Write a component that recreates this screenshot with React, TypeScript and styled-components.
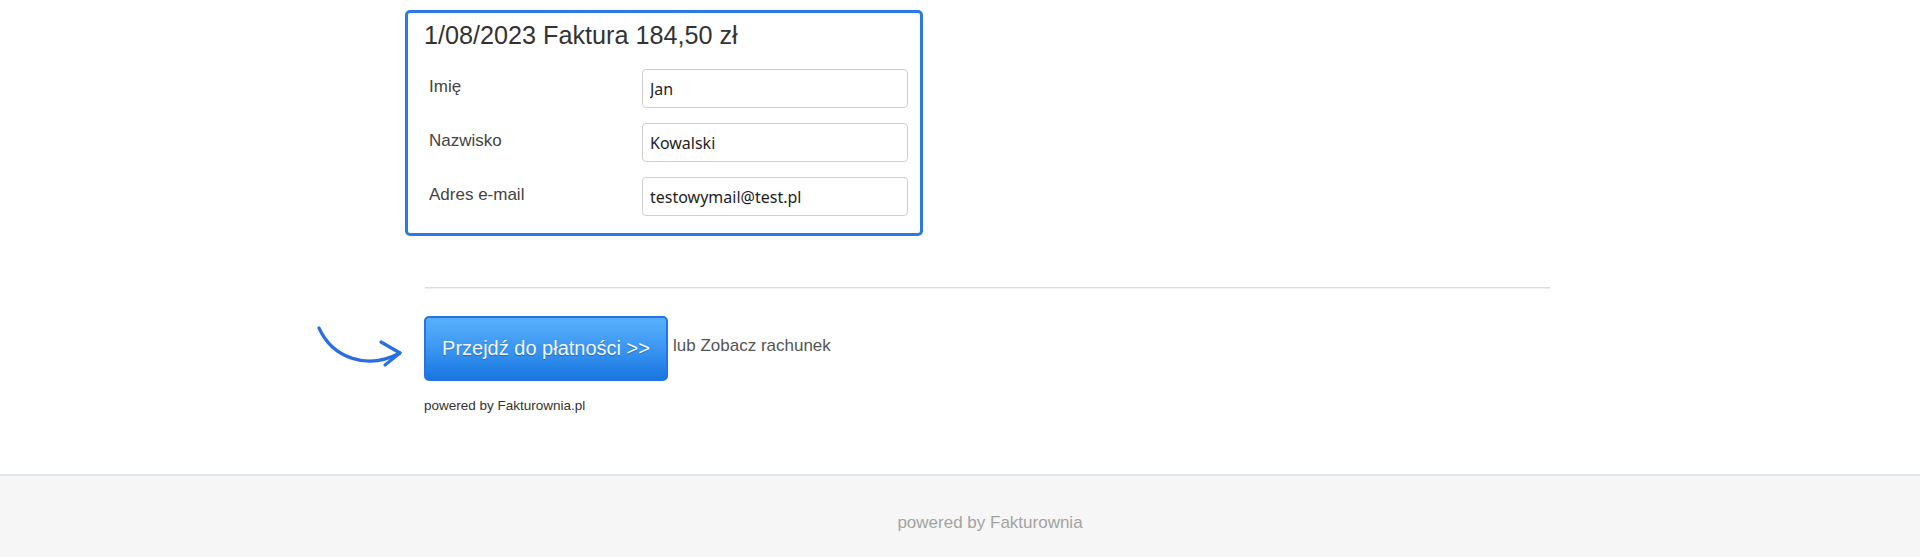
import React from "react";
import styled, { createGlobalStyle } from "styled-components";

const GlobalStyle = createGlobalStyle`
  html, body { margin: 0; padding: 0; background: #ffffff; }
  body { font-family: "Liberation Sans", Arial, sans-serif; color: #333; }
`;

const Page = styled.div`
  width: 1920px;
  height: 557px;
  display: flex;
  flex-direction: column;
  overflow: hidden;
`;

const Main = styled.main`
  flex: 1;
  padding-left: 54px;
`;

const Container = styled.div`
  width: 1126px;
  margin: 0 auto;
  display: flex;
  flex-direction: column;
`;

const FormBox = styled.section`
  box-sizing: border-box;
  width: 518px;
  height: 226px;
  margin: 10px 0 0 -19px;
  border: 3px solid #2b79e6;
  border-radius: 5px;
  padding: 8px 12px 0 16px;
  display: flex;
  flex-direction: column;
`;

const Title = styled.h2`
  margin: 0;
  font-family: "Liberation Sans", Arial, sans-serif;
  font-weight: 400;
  font-size: 25.2px;
  line-height: 28px;
  color: #333;
`;

const Fields = styled.div`
  margin-top: 20px;
  display: grid;
  grid-template-columns: 218px 266px;
  row-gap: 15px;
  align-items: center;
`;

const Label = styled.label`
  padding-left: 5px;
  font-size: 17px;
  color: #444;
  margin-top: -3px;
`;

const Input = styled.input`
  box-sizing: border-box;
  width: 266px;
  height: 39px;
  margin: 0;
  padding: 0 7px;
  border: 1px solid #cfcfcf;
  border-radius: 4px;
  background: #fff;
  font-family: "Noto Sans", "Open Sans", sans-serif;
  font-size: 16px;
  color: #1e1e1e;
  outline: none;
`;

const Divider = styled.hr`
  margin: 51px 0 0 1px;
  height: 0;
  border: 0;
  border-top: 1px solid #dcdcdc;
  border-bottom: 1px solid #efefef;
`;

const ActionRow = styled.div`
  position: relative;
  margin-top: 27px;
  display: flex;
  align-items: center;
`;

const ArrowMark = styled.svg`
  position: absolute;
  left: -110px;
  top: 9px;
  width: 92px;
  height: 48px;
  overflow: visible;
`;

const PayButton = styled.button`
  box-sizing: border-box;
  width: 244px;
  height: 65px;
  margin: 0;
  border: 2px solid #2573e4;
  border-radius: 5px;
  background: linear-gradient(to bottom, #58b0fb 0%, #3b96f1 50%, #1877e0 100%);
  color: #f4f8ff;
  font-family: "Liberation Sans", Arial, sans-serif;
  font-size: 20px;
  text-shadow: 0 1px 1px rgba(0, 40, 110, 0.35);
  cursor: pointer;
  padding: 0;
`;

const OrText = styled.span`
  margin-left: 5px;
  margin-top: -6px;
  font-size: 17px;
  color: #555;
`;

const Powered = styled.div`
  margin-top: 17px;
  font-size: 13.5px;
  line-height: 16px;
  color: #333;
`;

const Footer = styled.footer`
  box-sizing: border-box;
  height: 83px;
  border-top: 2px solid #dfe5ec;
  background: #f6f6f6;
  padding: 37px 0 0 60px;
  text-align: center;
  font-size: 17px;
  line-height: 20px;
  color: #a3a3a3;
`;

export default function App() {
  return (
    <>
      <GlobalStyle />
      <Page>
        <Main>
          <Container>
            <FormBox>
              <Title>1/08/2023 Faktura 184,50 zł</Title>
              <Fields>
                <Label>Imię</Label>
                <Input defaultValue="Jan" />
                <Label>Nazwisko</Label>
                <Input defaultValue="Kowalski" />
                <Label>Adres e-mail</Label>
                <Input defaultValue="testowymail@test.pl" />
              </Fields>
            </FormBox>
            <Divider />
            <ActionRow>
              <ArrowMark viewBox="0 0 92 48" aria-hidden="true">
                <path
                  d="M5 3 C 18 32, 52 46, 86 28"
                  fill="none"
                  stroke="#2a6fe0"
                  strokeWidth="3.2"
                  strokeLinecap="round"
                />
                <path
                  d="M67 17 L86 28 L71 40"
                  fill="none"
                  stroke="#2a6fe0"
                  strokeWidth="3.2"
                  strokeLinecap="round"
                  strokeLinejoin="round"
                />
              </ArrowMark>
              <PayButton type="button">Przejdź do płatności &gt;&gt;</PayButton>
              <OrText>lub Zobacz rachunek</OrText>
            </ActionRow>
            <Powered>powered by Fakturownia.pl</Powered>
          </Container>
        </Main>
        <Footer>powered by Fakturownia</Footer>
      </Page>
    </>
  );
}
